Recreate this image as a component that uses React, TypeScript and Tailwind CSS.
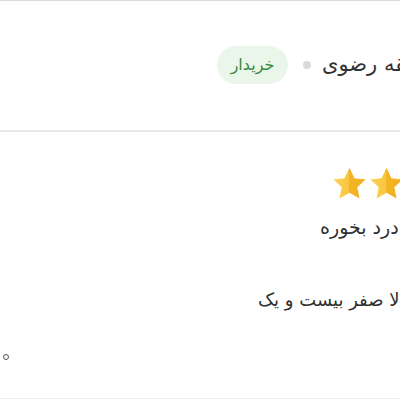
import React from "react";

const Star = () => (
  <svg width="37" height="36" viewBox="0 0 24 24" className="shrink-0">
    <defs>
      <linearGradient id="sg" x1="0" y1="0" x2="1" y2="0">
        <stop offset="0%" stopColor="#fbd35a" />
        <stop offset="50%" stopColor="#f8c63c" />
        <stop offset="50%" stopColor="#f3b526" />
        <stop offset="100%" stopColor="#f1b020" />
      </linearGradient>
    </defs>
    <path
      d="M12 1.2l3.3 6.9 7.5.9-5.6 5.1 1.5 7.5L12 17.8l-6.7 3.8 1.5-7.5L1.2 9l7.5-.9z"
      fill="url(#sg)"
    />
  </svg>
);

export default function App() {
  const font = { fontFamily: '"DejaVu Sans", sans-serif' };
  return (
    <div className="w-[400px] h-[400px] overflow-hidden bg-white relative" style={font}>
      <div className="w-[400px] h-[400px] flex flex-col">
        <div className="h-[1px] bg-[#dcdcdc] w-full" />
        <div className="h-[129px] pt-[44px]">
          <div className="flex items-center h-[40px] pl-[217px] whitespace-nowrap">
            <span className="h-[38px] w-[71px] shrink-0 rounded-full bg-[#eaf6ea] text-[#3b8841] text-[16px] flex items-center justify-center" dir="rtl">
              خریدار
            </span>
            <span className="w-[8px] h-[8px] shrink-0 rounded-full bg-[#d9d9d9] ml-[15px] mr-[11px]" />
            <span className="text-[21px] text-[#333] shrink-0" dir="rtl">صدیقه رضوی</span>
          </div>
        </div>
        <div className="h-[2px] bg-[#e8e8e8] w-full" />
        <div className="flex flex-col">
          <div className="flex pl-[331px] mt-[34px]">
            <Star />
            <Star />
            <Star />
            <Star />
            <Star />
          </div>
          <div className="flex pl-[320px] mt-[13px] whitespace-nowrap">
            <span className="text-[19px] leading-[24px] text-[#2f2f2f] shrink-0" dir="rtl">به درد بخوره</span>
          </div>
          <div className="flex pl-[258px] mt-[49px] whitespace-nowrap">
            <span className="text-[18px] leading-[24px] text-[#2f2f2f] shrink-0" dir="rtl">کالا صفر بیست و یک</span>
          </div>
        </div>
      </div>
      <span
        aria-label="۰"
        className="absolute left-[3px] top-[354px] w-[6px] h-[6px] rounded-full border-[1.5px] border-[#555]"
      />
      <div className="absolute left-0 bottom-[1px] w-full h-[1px] bg-[#ececec]" />
    </div>
  );
}
